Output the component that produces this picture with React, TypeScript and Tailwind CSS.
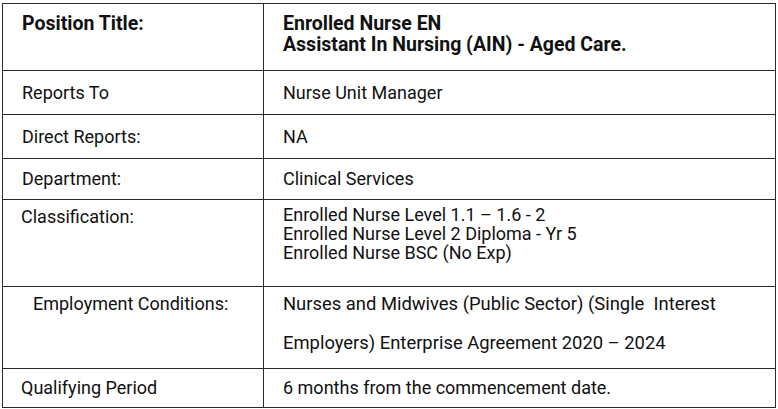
export default function App() {
  const rows: {
    h: string;
    align: string;
    left: React.ReactNode;
    right: React.ReactNode;
    leftClass?: string;
  }[] = [
    {
      h: "h-[66px]",
      align: "items-start pt-[9px]",
      left: <span className="font-bold text-[19.5px]">Position Title:</span>,
      right: (
        <div className="font-bold text-[19.5px] leading-[21px]">
          <div>Enrolled Nurse EN</div>
          <div>Assistant In Nursing (AIN) - Aged Care.</div>
        </div>
      ),
    },
    { h: "h-[44px]", align: "items-center", left: "Reports To", right: "Nurse Unit Manager" },
    { h: "h-[44px]", align: "items-center", left: "Direct Reports:", right: "NA" },
    { h: "h-[41px]", align: "items-center", left: "Department:", right: "Clinical Services" },
    {
      h: "h-[87px]",
      align: "items-start pt-[6px]",
      left: "Classification:",
      leftClass: "pl-[18px]",
      right: (
        <div className="leading-[19px] -mt-px">
          <div>Enrolled Nurse Level 1.1 – 1.6 - 2</div>
          <div>Enrolled Nurse Level 2 Diploma - Yr 5</div>
          <div>Enrolled Nurse BSC (No Exp)</div>
        </div>
      ),
    },
    {
      h: "h-[82px]",
      align: "items-start pt-[6px]",
      left: "Employment Conditions:",
      leftClass: "pl-[30px]",
      right: (
        <div className="flex flex-col gap-[17px] text-[18.4px]">
          <div className="whitespace-pre">Nurses and Midwives (Public Sector) (Single  Interest</div>
          <div>Employers) Enterprise Agreement 2020 – 2024</div>
        </div>
      ),
    },
    {
      h: "h-[39px]",
      align: "items-center",
      left: "Qualifying Period",
      leftClass: "pl-[18px]",
      right: "6 months from the commencement date.",
    },
  ];

  return (
    <div className="w-[778px] h-[409px] bg-white pt-[3px] pl-[2px]">
      <div
        className="w-[774px] border border-[#2a2a2a] text-[18px] leading-[22px] text-[#111]"
        style={{ fontFamily: "Roboto, 'Liberation Sans', sans-serif" }}
      >
        {rows.map((r, i) => (
          <div
            key={i}
            className={`flex ${r.h} ${i > 0 ? "border-t border-[#2a2a2a]" : ""}`}
          >
            <div
              className={`flex w-[261px] shrink-0 border-r border-[#2a2a2a] ${r.align} ${r.leftClass ?? "pl-[19px]"}`}
            >
              {r.left}
            </div>
            <div className={`flex flex-1 pl-[19px] ${r.align}`}>{r.right}</div>
          </div>
        ))}
      </div>
    </div>
  );
}
